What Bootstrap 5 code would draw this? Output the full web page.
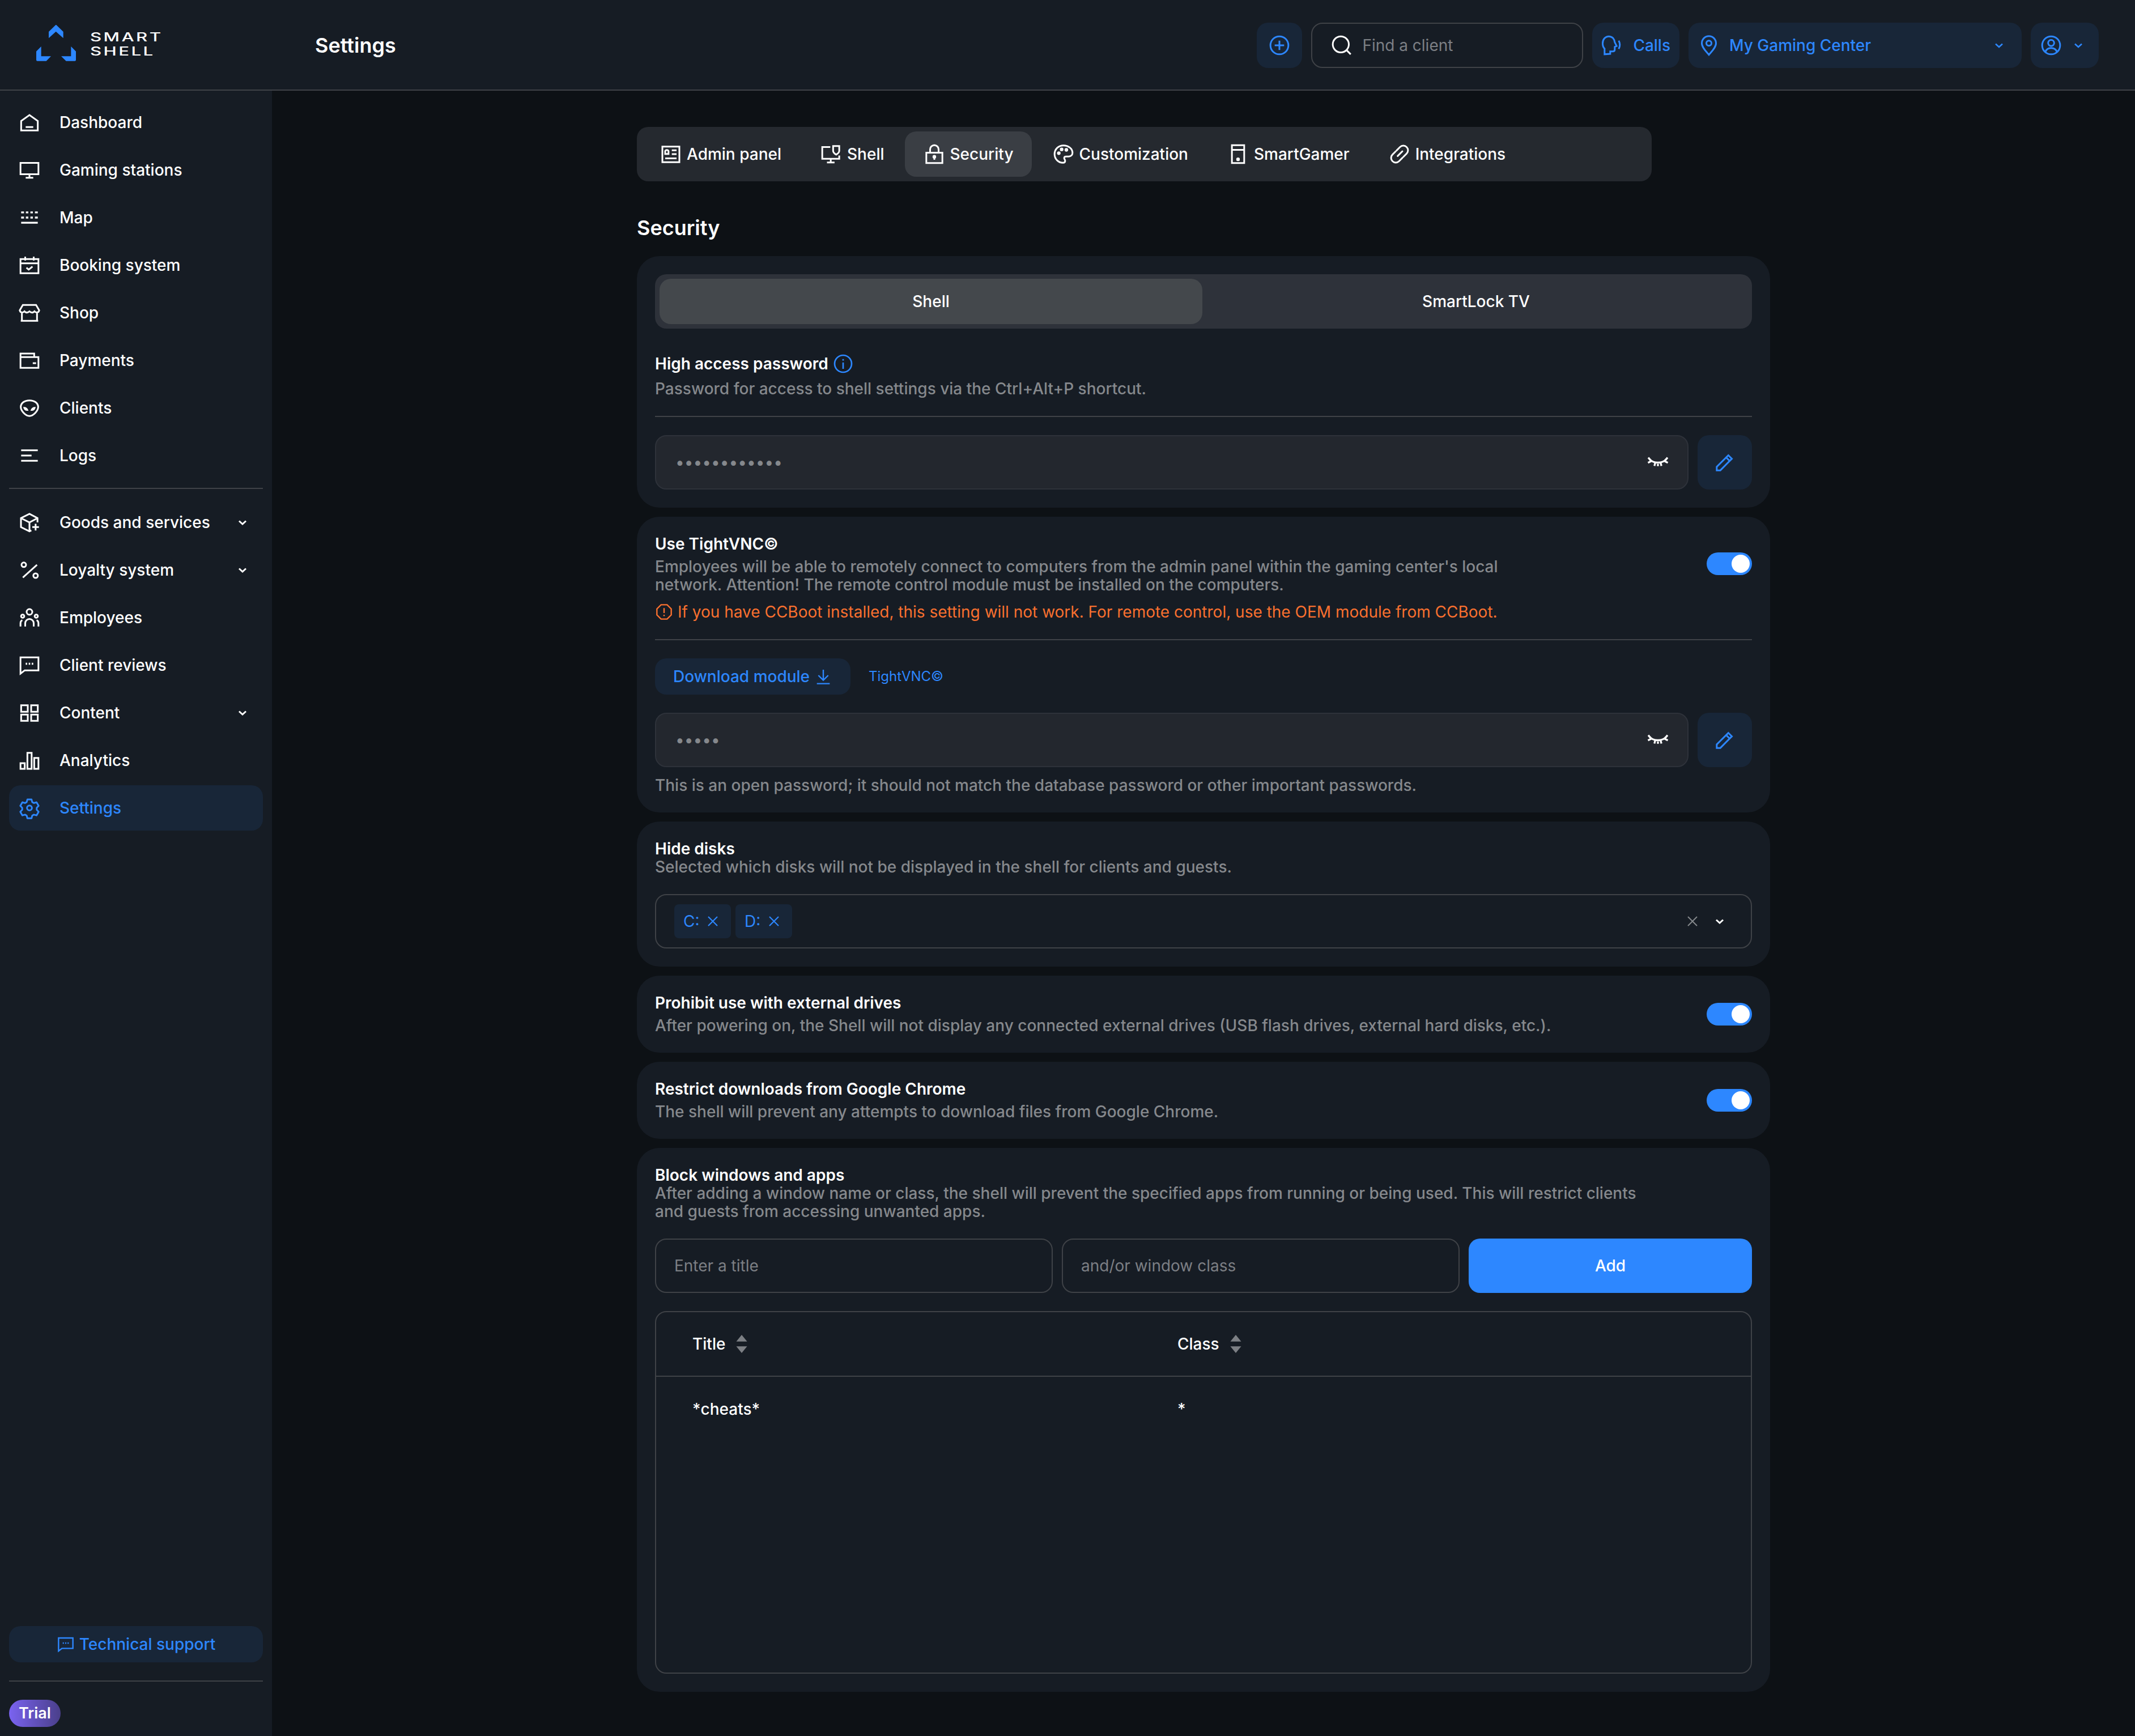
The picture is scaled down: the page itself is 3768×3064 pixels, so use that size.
<!DOCTYPE html>
<html lang="en" data-bs-theme="dark">
<head>
  <meta charset="UTF-8" />
  <title>Settings</title>
  <link href="https://cdn.jsdelivr.net/npm/bootstrap@5.3.0/dist/css/bootstrap.min.css" rel="stylesheet" />
  <style>
    html, body { height: 100%; }
    body { background: #0d1115; color: #fff; font-family: Inter, "Liberation Sans", sans-serif; font-size: 28px; line-height: 32px; font-weight: 500; overflow: hidden; }
    svg { display: block; flex: none; }
    .ico { width: 40px; height: 40px; fill: none; stroke: currentColor; stroke-width: 1.8; }
    .blue-txt { color: #2d87ff; }
    .top-head { height: 160px; background: #161c24; border-bottom: 2px solid #3f4247; padding-top: 2px; }
    .brand-box { width: 480px; padding-left: 64px; }
    .brand-box svg { margin-bottom: 8px; }
    .brand-txt { margin-left: 25px; margin-bottom: 5px; font-size: 22px; line-height: 25px; letter-spacing: 2.4px; transform: scaleX(1.42); transform-origin: left center; }
    .page-name { font-size: 36px; font-weight: 600; margin-left: 76px; }
    .head-acts { margin-left: auto; margin-right: 64px; gap: 16px; }
    .soft-btn { height: 80px; background: #182638; color: #2d87ff; border: 0; border-radius: 20px; font-size: 28px; font-weight: 500; padding: 0 16px; display: flex; align-items: center; gap: 16px; }
    .soft-btn:hover, .soft-btn:active { background: #182638 !important; color: #2d87ff !important; }
    .plus-btn { width: 80px; justify-content: center; padding: 0; }
    .search-box { width: 480px; height: 80px; border: 2px solid #3f4247; border-radius: 20px; padding: 0 30px 0 32px; gap: 16px; }
    .search-box input { background: transparent; border: 0; padding: 0; font-size: 28px; font-weight: 400; box-shadow: none !important; }
    .form-control::placeholder { color: #7c7f84; }
    .body-row { height: calc(100% - 160px); }
    .side-col { width: 480px; background: #161c24; padding: 16px 16px 16px; }
    .side-col .nav { gap: 4px; }
    .side-col .nav-link { height: 80px; padding: 0 16px; color: #fff; border-radius: 20px; gap: 33px; }
    .side-col .nav-link.active { background: #182638; color: #2d87ff; }
    .side-col hr { border-top: 2px solid #3f4247; opacity: 1; margin: 17px 0 19px; }
    .chev { width: 24px; height: 24px; fill: none; stroke: currentColor; stroke-width: 3; margin-left: auto; margin-right: 8px; }
    .chev-sm { width: 24px; height: 24px; fill: none; stroke: currentColor; stroke-width: 2.6; }
    .help-btn { height: 64px; justify-content: center; gap: 8px; }
    .side-end hr { margin: 32px 0; }
    .trial-tag { background: linear-gradient(90deg, #7a63f0, #4a3f8a); font-size: 27px; line-height: 48px; font-weight: 600; padding: 0 17px; align-self: flex-start; }
    .main-col { overflow: hidden; }
    .main-inner { width: 2000px; margin: 0 auto; padding-top: 64px; }
    .tab-strip { width: 1791px; height: 96px; background: #25292f; border-radius: 20px; padding: 8px; gap: 4px; }
    .tab-strip .nav-link { height: 80px; padding: 0 32px; color: #fff; border-radius: 20px; gap: 8px; }
    .tab-strip .nav-link.active { background: #3a3e44; color: #fff; }
    .sec-title { font-size: 36px; line-height: 48px; font-weight: 600; margin: 58px 0 26px; }
    .stack-gap { gap: 16px; }
    .set-card { background: #161c24; border: 0; border-radius: 40px; padding: 32px; color: #fff; }
    .card-head { font-weight: 600; }
    .seg-row { height: 96px; background: #2e323a; border-radius: 20px; padding: 8px; gap: 4px; }
    .seg-row .nav-link { height: 80px; flex: 1 1 0; display: flex; align-items: center; justify-content: center; color: #fff; border-radius: 20px; padding: 0; }
    .seg-row .nav-link.active { background: #44484c; color: #fff; }
    .hint { color: #85888c; }
    .warn-line { color: #f9702f; gap: 8px; margin-top: 16px; font-weight: 400; }
    .line-sep { border-top: 2px solid #3f4247; opacity: 1; margin: 32px 0; }
    .pass-box { height: 96px; background: #23272e; border: 2px solid #2e323a; border-radius: 20px; padding: 0 32px 0 34px; }
    .pass-box input { background: transparent; border: 0; padding: 0; color: #85888c; font-size: 28px; letter-spacing: 0; box-shadow: none !important; }
    .eye-btn { color: #fff; }
    .sq-btn { width: 96px; height: 96px; justify-content: center; padding: 0; }
    .form-switch .form-check-input.big-sw { width: 80px; height: 40px; margin: 0; background-color: #2d87ff; border: 0; --bs-form-switch-bg: url("data:image/svg+xml,%3csvg xmlns='http://www.w3.org/2000/svg' viewBox='-4 -4 8 8'%3e%3ccircle r='3.2' fill='%23fff'/%3e%3c/svg%3e"); }
    .form-switch.plain-sw { padding: 0; margin: 0; min-height: 0; display: flex; }
    .dl-btn { height: 64px; padding: 0 32px; gap: 8px; }
    .small-link { font-size: 24px; color: #2d87ff; text-decoration: none; margin-left: 32px; font-weight: 400; }
    .multi-box { height: 96px; border: 2px solid #3f4247; border-radius: 20px; padding: 0 43px 0 32px; gap: 8px; }
    .chip { width: 100px; height: 60px; background: #182638; color: #2d87ff; border-radius: 8px; padding: 0 20px 0 16px; justify-content: space-between; font-weight: 400; }
    .plain-field { height: 96px; background: transparent; border: 2px solid #3f4247; border-radius: 20px; padding: 0 32px; font-size: 28px; color: #fff; font-weight: 400; box-shadow: none !important; }
    .add-btn { width: 500px; height: 96px; background: #2d87ff; border: 0; border-radius: 20px; font-size: 28px; font-weight: 500; }
    .tbl-box { height: 640px; border: 2px solid #3f4247; border-radius: 20px; margin-top: 32px; overflow: hidden; }
    .tbl-box .table { --bs-table-bg: transparent; --bs-table-color: #fff; margin: 0; table-layout: fixed; }
    .tbl-box th { height: 113px; padding: 0 0 0 64px; border-bottom: 2px solid #3f4247; font-weight: 500; vertical-align: middle; }
    .tbl-box td { height: 114px; padding: 0 0 0 64px; border: 0; vertical-align: middle; font-weight: 500; }
    .sort-ico { width: 24px; height: 34px; fill: #7c7f84; margin-left: 17px; }
  </style>
</head>
<body>
  <svg width="0" height="0" style="position:absolute">
    <defs>
      <symbol id="i-home" viewBox="0 0 24 24"><path d="M3.200 20.500v-10L12 4.200l8.800 6.300v10zM8 17h8"/></symbol>
      <symbol id="i-monitor" viewBox="0 0 24 24"><path d="M2.500 4.500h19v12h-19zM12 16.500v3.500M8 20.300h8"/></symbol>
      <symbol id="i-map" viewBox="0 0 24 24"><path d="M3.200 6.500h3M8.200 6.500h2.600M13 6.500h2.600M17.800 6.500h3M3.200 12h3M8.200 12h2.600M13 12h2.600M17.800 12h3M3.200 17.500h17.600" stroke-width="2"/></symbol>
      <symbol id="i-cal" viewBox="0 0 24 24"><path d="M2.500 5.500h19v15h-19zM7.500 3v4M16.500 3v4M2.500 10h19M8.800 14.700l2.400 2 4-3.200"/></symbol>
      <symbol id="i-shop" viewBox="0 0 24 24"><path d="M5 3.800h14l3.300 5.700c-.8 3-3.500 2.500-5 1-1.500 1.600-3.500 1.600-5.300 0-1.800 1.600-3.800 1.600-5.300 0-1.500 1.500-4.200 2-5-1zM4 11.500v9h16v-9M2.800 20.500h18.400"/></symbol>
      <symbol id="i-wallet" viewBox="0 0 24 24"><path d="M2.500 8.500h19v11.500h-19zM2.500 8.500V4.800h14.500v3.700M15.500 15h3.500"/></symbol>
      <symbol id="i-alien" viewBox="0 0 24 24"><path d="M12 4c5.500 0 9.200 3 9.200 7 0 4-5 9.500-9.200 9.500S2.800 15 2.800 11c0-4 3.700-7 9.200-7z"/><path d="M6 11.500c2 0 3.600 1 4.300 3-2.300.3-3.800-.8-4.300-3zM18 11.500c-2 0-3.600 1-4.300 3 2.300.3 3.800-.8 4.300-3z" fill="currentColor" stroke-width="1"/></symbol>
      <symbol id="i-logs" viewBox="0 0 24 24"><path d="M3.200 6.500h17.600M3.200 12h11M3.200 17.500h17.600"/></symbol>
      <symbol id="i-box" viewBox="0 0 24 24"><path d="M20.500 12V7.500L12 3 3 7.500v9.500l9 4.500 2-1M3 7.500l9 4.500 8.500-4.500M12 12v9M15 17h7M18.500 13.500v7"/></symbol>
      <symbol id="i-pct" viewBox="0 0 24 24"><path d="M5 20L20 6.500"/><circle cx="6" cy="6.500" r="2.400"/><circle cx="18.500" cy="18" r="2.400"/></symbol>
      <symbol id="i-team" viewBox="0 0 24 24"><circle cx="12" cy="6" r="3"/><circle cx="4.800" cy="10.500" r="1.700"/><circle cx="19.200" cy="10.500" r="1.700"/><path d="M7.500 21.500v-3.500a4.500 4.500 0 0 1 9 0v3.500M2.500 21.500V18c0-1.500.8-2.800 2-3.200M21.500 21.500V18c0-1.500-.8-2.800-2-3.200"/></symbol>
      <symbol id="i-chat" viewBox="0 0 24 24"><path d="M2.500 3.800h19v13.700H7l-4.500 3.500z"/><path d="M8 10.500h1.600M11.200 10.500h1.600M14.400 10.500H16" stroke-width="2"/></symbol>
      <symbol id="i-grid" viewBox="0 0 24 24"><path d="M3.200 4h7v7h-7zM13.800 4h7v7h-7zM3.200 14h7v6.500h-7zM13.800 14h7v6.500h-7z"/></symbol>
      <symbol id="i-bars" viewBox="0 0 24 24"><path d="M2.500 15h4.500v6h-4.500zM9.800 4h4.500v17H9.800zM17 9.500h4.500V21H17z"/></symbol>
      <symbol id="i-gear" viewBox="0 0 24 24"><path d="M9.800 3h4.400l.7 2.800 1.800 1 2.800-.8 2.200 3.800-2 2.100v2.100l2 2.100-2.200 3.800-2.800-.8-1.800 1-.7 2.900H9.800l-.7-2.900-1.800-1-2.800.8-2.200-3.800 2-2.100v-2.100l-2-2.100L4.500 6l2.800.8 1.800-1z" stroke-linejoin="round"/><circle cx="12" cy="12" r="2.600"/></symbol>
      <symbol id="i-plus" viewBox="0 0 24 24"><circle cx="12" cy="12" r="9.500"/><path d="M12 7v10M7 12h10"/></symbol>
      <symbol id="i-search" viewBox="0 0 24 24"><circle cx="11" cy="11" r="8.500"/><path d="M17.200 17.200l4.300 4.300"/></symbol>
      <symbol id="i-calls" viewBox="0 0 24 24"><path d="M3.500 21.500v-6C2 14 1.500 12.500 1.500 10c0-4.500 3-7.500 6.500-7.500 3.800 0 6 3 6.300 6.300l2 4-2 .8v2.900c0 1.200-.8 2-2 2H9.500v2.500zM18.500 7c1.500 2.800 1.500 6 0 8.800"/></symbol>
      <symbol id="i-pin" viewBox="0 0 24 24"><path d="M12 22c-3-3.500-7.500-7.800-7.500-12.300a7.500 7.500 0 0 1 15 0C19.500 14.200 15 18.500 12 22z"/><circle cx="12" cy="9.800" r="2.700"/></symbol>
      <symbol id="i-user" viewBox="0 0 24 24"><circle cx="12" cy="12" r="9.500"/><circle cx="12" cy="9.500" r="3.200"/><path d="M5.800 19c1-2.800 3.300-4.200 6.200-4.200s5.200 1.400 6.200 4.200"/></symbol>
      <symbol id="i-card" viewBox="0 0 24 24"><path d="M3 4h18v16.500H3zM6 16.500h12M6 8.800c.5-1.500 3-1.500 3.500 0v3H6zM13 8h5M13 12h5"/></symbol>
      <symbol id="i-shell" viewBox="0 0 24 24"><path d="M11 4.500H2.500v12.500h18v-3.500M11.500 17v3.500M7.500 20.800h8"/><path d="M14 3.500h6.500v5c0 1.800-1.500 3-3.200 4-1.800-1-3.300-2.200-3.300-4z"/></symbol>
      <symbol id="i-lock" viewBox="0 0 24 24"><path d="M3.500 10.500h17V21.500h-17zM7.500 10.500V7a4.500 4.500 0 0 1 9 0v3.500M12 14v4"/><circle cx="12" cy="14.800" r="1" fill="currentColor"/></symbol>
      <symbol id="i-palette" viewBox="0 0 24 24"><path d="M12 2.800c-5.500 0-9.500 4-9.500 9.200 0 5.200 4 9.200 9 9.200 1.500 0 2.200-1 2.200-2 0-1.500-1-1.800-1-3 0-1 .8-1.700 2-1.700h2.800c2.500 0 4-1.700 4-3.800 0-4.500-4.500-7.900-9.500-7.900z"/><circle cx="7" cy="11" r="1" fill="currentColor"/><circle cx="10" cy="7" r="1" fill="currentColor"/><circle cx="15" cy="7.500" r="1" fill="currentColor"/></symbol>
      <symbol id="i-phone" viewBox="0 0 24 24"><path d="M5.500 2.500h13v19h-13zM5.500 7.500h13"/><circle cx="12" cy="17.500" r="1" fill="currentColor"/></symbol>
      <symbol id="i-link" viewBox="0 0 24 24"><path d="M10 14l5-5M9 8l3.500-3.500a4.800 4.800 0 0 1 7 7L16 15M15 16l-3.500 3.500a4.800 4.800 0 0 1-7-7L8 9" stroke-linecap="round"/></symbol>
      <symbol id="i-eye" viewBox="0 0 24 24"><path d="M3.200 8.500C7 13.500 17 13.500 20.800 8.500M1.800 7l3.400 4M22.200 7l-3.400 4M1.500 12.500l3.600-1.800M22.500 12.500l-3.600-1.800M9 13l-.7 2.800M15 13l.7 2.800M12 13.500v2.500" stroke-width="2"/></symbol>
      <symbol id="i-pencil" viewBox="0 0 24 24"><path d="M3.500 20.500v-3.800L15.800 4.500l3.700 3.700L7.300 20.500zM13.500 6.800l3.700 3.700"/></symbol>
      <symbol id="i-info" viewBox="0 0 24 24"><circle cx="12" cy="12" r="10"/><path d="M12 10.500V18M12 6.500v1.800"/></symbol>
      <symbol id="i-warn" viewBox="0 0 24 24"><path d="M8 2.500h8L21.500 8v8L16 21.500H8L2.500 16V8z"/><path d="M12 7v6.500M12 15.800v1.800"/></symbol>
      <symbol id="i-down" viewBox="0 0 24 24"><path d="M12 3v14M5.500 10.500L12 17l6.500-6.500M3.500 21.500h17"/></symbol>
      <symbol id="i-x" viewBox="0 0 24 24"><path d="M4 4l16 16M20 4L4 20"/></symbol>
      <symbol id="i-chev" viewBox="0 0 24 24"><path d="M6 9.500l6 5.500 6-5.500"/></symbol>
    </defs>
  </svg>

  <header class="top-head d-flex align-items-center">
    <div class="brand-box d-flex align-items-center">
      <svg width="70" height="64" viewBox="72 72 210 192" fill="#2d87ff"><path d="M138 108L175 72l3 0 37 36v34l-39-35-38 35zM72 212l26-26v52h52l-25 25H78q-6 0-6-6zM282 212l-26-26v52h-52l26 25h46q6 0 6-6z"/></svg>
      <div class="brand-txt">SMART<br>SHELL</div>
    </div>
    <div class="page-name">Settings</div>
    <div class="head-acts d-flex align-items-center">
      <button class="btn soft-btn plus-btn" type="button"><svg class="ico"><use href="#i-plus"/></svg></button>
      <div class="search-box d-flex align-items-center">
        <svg class="ico text-white"><use href="#i-search"/></svg>
        <input class="form-control" type="text" placeholder="Find a client" />
      </div>
      <button class="btn soft-btn" type="button"><svg class="ico"><use href="#i-calls"/></svg>Calls</button>
      <button class="btn soft-btn justify-content-between" type="button" style="width:588px;padding-right:28px">
        <span class="d-flex align-items-center gap-3"><svg class="ico"><use href="#i-pin"/></svg>My Gaming Center</span>
        <svg class="chev-sm"><use href="#i-chev"/></svg>
      </button>
      <button class="btn soft-btn" type="button" style="gap:16px;padding-right:24px"><svg class="ico"><use href="#i-user"/></svg><svg class="chev-sm"><use href="#i-chev"/></svg></button>
    </div>
  </header>

  <div class="body-row d-flex">
    <aside class="side-col d-flex flex-column flex-shrink-0">
      <nav class="nav flex-column">
        <a class="nav-link d-flex align-items-center" href="#"><svg class="ico"><use href="#i-home"/></svg>Dashboard</a>
        <a class="nav-link d-flex align-items-center" href="#"><svg class="ico"><use href="#i-monitor"/></svg>Gaming stations</a>
        <a class="nav-link d-flex align-items-center" href="#"><svg class="ico"><use href="#i-map"/></svg>Map</a>
        <a class="nav-link d-flex align-items-center" href="#"><svg class="ico"><use href="#i-cal"/></svg>Booking system</a>
        <a class="nav-link d-flex align-items-center" href="#"><svg class="ico"><use href="#i-shop"/></svg>Shop</a>
        <a class="nav-link d-flex align-items-center" href="#"><svg class="ico"><use href="#i-wallet"/></svg>Payments</a>
        <a class="nav-link d-flex align-items-center" href="#"><svg class="ico"><use href="#i-alien"/></svg>Clients</a>
        <a class="nav-link d-flex align-items-center" href="#"><svg class="ico"><use href="#i-logs"/></svg>Logs</a>
      </nav>
      <hr />
      <nav class="nav flex-column">
        <a class="nav-link d-flex align-items-center" href="#"><svg class="ico"><use href="#i-box"/></svg>Goods and services<svg class="chev"><use href="#i-chev"/></svg></a>
        <a class="nav-link d-flex align-items-center" href="#"><svg class="ico"><use href="#i-pct"/></svg>Loyalty system<svg class="chev"><use href="#i-chev"/></svg></a>
        <a class="nav-link d-flex align-items-center" href="#"><svg class="ico"><use href="#i-team"/></svg>Employees</a>
        <a class="nav-link d-flex align-items-center" href="#"><svg class="ico"><use href="#i-chat"/></svg>Client reviews</a>
        <a class="nav-link d-flex align-items-center" href="#"><svg class="ico"><use href="#i-grid"/></svg>Content<svg class="chev"><use href="#i-chev"/></svg></a>
        <a class="nav-link d-flex align-items-center" href="#"><svg class="ico"><use href="#i-bars"/></svg>Analytics</a>
        <a class="nav-link active d-flex align-items-center" href="#"><svg class="ico"><use href="#i-gear"/></svg>Settings</a>
      </nav>
      <div class="side-end mt-auto d-flex flex-column">
        <button class="btn soft-btn help-btn" type="button"><svg class="ico" style="width:32px;height:32px"><use href="#i-chat"/></svg>Technical support</button>
        <hr />
        <span class="badge rounded-pill trial-tag">Trial</span>
      </div>
    </aside>

    <main class="main-col flex-grow-1">
      <div class="main-inner">
        <nav class="nav tab-strip">
          <a class="nav-link d-flex align-items-center" href="#"><svg class="ico"><use href="#i-card"/></svg>Admin panel</a>
          <a class="nav-link d-flex align-items-center" href="#"><svg class="ico"><use href="#i-shell"/></svg>Shell</a>
          <a class="nav-link active d-flex align-items-center" href="#"><svg class="ico"><use href="#i-lock"/></svg>Security</a>
          <a class="nav-link d-flex align-items-center" href="#"><svg class="ico"><use href="#i-palette"/></svg>Customization</a>
          <a class="nav-link d-flex align-items-center" href="#"><svg class="ico"><use href="#i-phone"/></svg>SmartGamer</a>
          <a class="nav-link d-flex align-items-center" href="#"><svg class="ico"><use href="#i-link"/></svg>Integrations</a>
        </nav>
        <h2 class="sec-title">Security</h2>

        <div class="d-flex flex-column stack-gap">
          <section class="card set-card">
            <nav class="nav seg-row">
              <a class="nav-link active" href="#">Shell</a>
              <a class="nav-link" href="#">SmartLock TV</a>
            </nav>
            <div class="card-head d-flex align-items-center gap-2" style="margin-top:42px;height:40px">High access password <svg class="ico blue-txt" style="width:36px;height:36px"><use href="#i-info"/></svg></div>
            <div class="hint mt-2">Password for access to shell settings via the Ctrl+Alt+P shortcut.</div>
            <hr class="line-sep" />
            <div class="d-flex gap-3">
              <div class="pass-box d-flex align-items-center flex-grow-1">
                <input class="form-control" type="password" value="123456789012" />
                <svg class="ico eye-btn"><use href="#i-eye"/></svg>
              </div>
              <button class="btn soft-btn sq-btn" type="button"><svg class="ico"><use href="#i-pencil"/></svg></button>
            </div>
          </section>

          <section class="card set-card">
            <div class="d-flex justify-content-between align-items-start">
              <div style="max-width:1560px">
                <div class="card-head">Use TightVNC©</div>
                <div class="hint mt-2">Employees will be able to remotely connect to computers from the admin panel within the gaming center's local network. Attention! The remote control module must be installed on the computers.</div>
                <div class="warn-line d-flex align-items-center text-nowrap"><svg class="ico" style="width:32px;height:32px"><use href="#i-warn"/></svg>If you have CCBoot installed, this setting will not work. For remote control, use the OEM module from CCBoot.</div>
              </div>
              <div class="form-check form-switch plain-sw" style="margin-top:31px"><input class="form-check-input big-sw" type="checkbox" role="switch" checked /></div>
            </div>
            <hr class="line-sep" />
            <div class="d-flex align-items-center">
              <button class="btn soft-btn dl-btn" type="button">Download module <svg class="ico" style="width:32px;height:32px"><use href="#i-down"/></svg></button>
              <a class="small-link" href="#">TightVNC©</a>
            </div>
            <div class="d-flex gap-3" style="margin-top:32px">
              <div class="pass-box d-flex align-items-center flex-grow-1">
                <input class="form-control" type="password" value="12345" />
                <svg class="ico eye-btn"><use href="#i-eye"/></svg>
              </div>
              <button class="btn soft-btn sq-btn" type="button"><svg class="ico"><use href="#i-pencil"/></svg></button>
            </div>
            <div class="hint mt-3">This is an open password; it should not match the database password or other important passwords.</div>
          </section>

          <section class="card set-card">
            <div class="card-head">Hide disks</div>
            <div class="hint">Selected which disks will not be displayed in the shell for clients and guests.</div>
            <div class="multi-box d-flex align-items-center" style="margin-top:32px">
              <span class="chip d-flex align-items-center">C:<svg class="ico" style="width:24px;height:24px;stroke-width:2.2"><use href="#i-x"/></svg></span>
              <span class="chip d-flex align-items-center">D:<svg class="ico" style="width:24px;height:24px;stroke-width:2.2"><use href="#i-x"/></svg></span>
              <svg class="ico hint ms-auto" style="width:24px;height:24px;stroke-width:2"><use href="#i-x"/></svg>
              <svg class="chev-sm text-white" style="margin-left:16px;stroke-width:3"><use href="#i-chev"/></svg>
            </div>
          </section>

          <section class="card set-card d-flex flex-row justify-content-between align-items-center">
            <div>
              <div class="card-head">Prohibit use with external drives</div>
              <div class="hint mt-2">After powering on, the Shell will not display any connected external drives (USB flash drives, external hard disks, etc.).</div>
            </div>
            <div class="form-check form-switch plain-sw"><input class="form-check-input big-sw" type="checkbox" role="switch" checked /></div>
          </section>

          <section class="card set-card d-flex flex-row justify-content-between align-items-center">
            <div>
              <div class="card-head">Restrict downloads from Google Chrome</div>
              <div class="hint mt-2">The shell will prevent any attempts to download files from Google Chrome.</div>
            </div>
            <div class="form-check form-switch plain-sw"><input class="form-check-input big-sw" type="checkbox" role="switch" checked /></div>
          </section>

          <section class="card set-card">
            <div class="card-head">Block windows and apps</div>
            <div class="hint" style="max-width:1760px">After adding a window name or class, the shell will prevent the specified apps from running or being used. This will restrict clients and guests from accessing unwanted apps.</div>
            <div class="d-flex gap-3" style="margin-top:32px">
              <input class="form-control plain-field flex-grow-1" type="text" placeholder="Enter a title" />
              <input class="form-control plain-field flex-grow-1" type="text" placeholder="and/or window class" />
              <button class="btn btn-primary add-btn flex-shrink-0" type="button">Add</button>
            </div>
            <div class="tbl-box">
              <table class="table">
                <colgroup><col style="width:856px" /><col /></colgroup>
                <thead>
                  <tr>
                    <th><span class="d-inline-flex align-items-center">Title<svg class="sort-ico" viewBox="0 0 22 32"><path d="M11 1l9 11H2zM11 31l9-11H2z"/></svg></span></th>
                    <th><span class="d-inline-flex align-items-center">Class<svg class="sort-ico" viewBox="0 0 22 32"><path d="M11 1l9 11H2zM11 31l9-11H2z"/></svg></span></th>
                  </tr>
                </thead>
                <tbody>
                  <tr><td>*cheats*</td><td>*</td></tr>
                </tbody>
              </table>
            </div>
          </section>
        </div>
      </div>
    </main>
  </div>
</body>
</html>
